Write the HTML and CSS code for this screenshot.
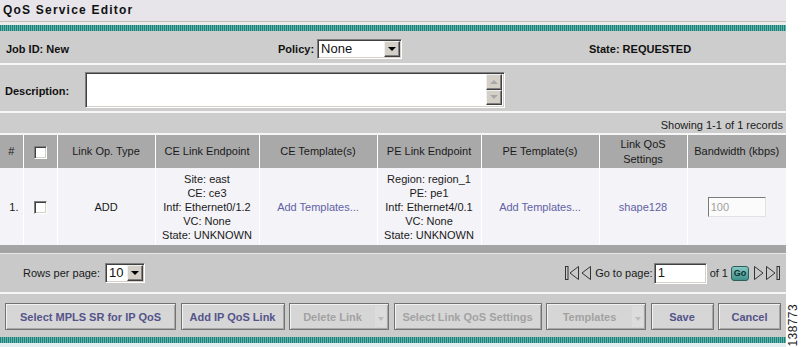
FILE: index.html
```html
<!DOCTYPE html>
<html lang="en">
<head>
    <meta charset="UTF-8">
    <title>QoS Service Editor</title>
    <link rel="stylesheet" href="styles.css">
</head>
<body>
<div class="page">
    <div class="panel">
        <div class="title">QoS Service Editor</div>
        <div class="stripe stripe-top"></div>

        <!-- job summary -->
        <div class="info-row">
            <div class="label">Job ID: New</div>
            <div class="policy">
                <span class="label">Policy:</span>
                <div class="select policy-select">
                    <span class="select-text">None</span>
                    <span class="select-btn"><i class="tri-down"></i></span>
                </div>
            </div>
            <div class="label">State: REQUESTED</div>
        </div>

        <div class="desc-row">
            <span class="label desc-label">Description:</span>
            <div class="textarea">
                <div class="scroll">
                    <span class="scroll-btn"><i class="tri-up light"></i></span>
                    <span class="scroll-btn"><i class="tri-down light"></i></span>
                </div>
            </div>
        </div>

        <div class="showing">Showing 1-1 of 1 records</div>

        <table class="grid">
            <colgroup>
                <col style="width:23px">
                <col style="width:34px">
                <col style="width:98px">
                <col style="width:104px">
                <col style="width:118px">
                <col style="width:104px">
                <col style="width:118px">
                <col style="width:88px">
                <col style="width:99px">
            </colgroup>
            <thead>
                <tr>
                    <th>#</th>
                    <th><span class="check"></span></th>
                    <th>Link Op. Type</th>
                    <th>CE Link Endpoint</th>
                    <th>CE Template(s)</th>
                    <th>PE Link Endpoint</th>
                    <th>PE Template(s)</th>
                    <th>Link QoS<br>Settings</th>
                    <th>Bandwidth (kbps)</th>
                </tr>
            </thead>
            <tbody>
                <tr>
                    <td class="num">1.</td>
                    <td><span class="check"></span></td>
                    <td>ADD</td>
                    <td>Site: east<br>CE: ce3<br>Intf: Ethernet0/1.2<br>VC: None<br>State: UNKNOWN</td>
                    <td><a href="#">Add Templates...</a></td>
                    <td>Region: region_1<br>PE: pe1<br>Intf: Ethernet4/0.1<br>VC: None<br>State: UNKNOWN</td>
                    <td><a href="#">Add Templates...</a></td>
                    <td><a href="#">shape128</a></td>
                    <td><div class="bw-input">100</div></td>
                </tr>
            </tbody>
        </table>
        <div class="grid-foot"></div>

        <div class="pager">
            <div class="rows">
                <span>Rows per page:</span>
                <div class="select rows-select">
                    <span class="select-text">10</span>
                    <span class="select-btn"><i class="tri-down"></i></span>
                </div>
            </div>
            <div class="nav">
                <svg class="nav-icon" width="14" height="16" viewBox="0 0 14 16"><rect x="0.5" y="1.5" width="2.5" height="13" fill="none" stroke="#333"/><path d="M13.5 1.5 L5 8 L13.5 14.5 Z" fill="none" stroke="#333"/></svg>
                <svg class="nav-icon" width="10" height="16" viewBox="0 0 10 16"><path d="M9.5 1.5 L1 8 L9.5 14.5 Z" fill="none" stroke="#333"/></svg>
                <span class="goto">Go to page:</span>
                <div class="page-input">1</div>
                <span class="of">of 1</span>
                <span class="go">Go</span>
                <svg class="nav-icon" width="10" height="16" viewBox="0 0 10 16"><path d="M0.5 1.5 L9 8 L0.5 14.5 Z" fill="none" stroke="#333"/></svg>
                <svg class="nav-icon last" width="14" height="16" viewBox="0 0 14 16"><path d="M0.5 1.5 L9 8 L0.5 14.5 Z" fill="none" stroke="#333"/><rect x="11" y="1.5" width="2.5" height="13" fill="none" stroke="#333"/></svg>
            </div>
        </div>

        <div class="actions">
            <div class="btn w-mpls">Select MPLS SR for IP QoS</div>
            <div class="btn w-add">Add IP QoS Link</div>
            <div class="btn drop disabled w-delete"><span class="btn-label">Delete Link</span><span class="btn-arrow"><i class="tri-down pale"></i></span></div>
            <div class="btn disabled w-link">Select Link QoS Settings</div>
            <div class="btn drop disabled w-tpl"><span class="btn-label">Templates</span><span class="btn-arrow"><i class="tri-down pale"></i></span></div>
            <div class="btn w-small">Save</div>
            <div class="btn w-small">Cancel</div>
        </div>
        <div class="stripe"></div>
        <div class="bottom"></div>
    </div>
    <div class="figure-id">138773</div>
</div>
</body>
</html>
```

FILE: styles.css
```css
* { box-sizing: border-box; }
body {
    margin: 0;
    background: #fff;
    font-family: "Liberation Sans", Arial, sans-serif;
    font-size: 11px;
    color: #1a1a1a;
}
.page {
    display: flex;
    width: 801px;
    height: 347px;
}
.panel {
    width: 786px;
    display: flex;
    flex-direction: column;
    background: #cdcdcd;
}
.figure-id {
    width: 15px;
    align-self: flex-end;
    writing-mode: vertical-rl;
    transform: rotate(180deg);
    font-size: 12px;
    line-height: 15px;
    letter-spacing: 0.4px;
    color: #222;
    padding-top: 1px;
}

.title {
    height: 22px;
    background: #e7e5ea;
    border-bottom: 1px solid #c6bdb4;
    font-size: 12px;
    font-weight: bold;
    letter-spacing: 1.2px;
    line-height: 21px;
    padding-left: 3px;
    color: #111;
}
.stripe {
    height: 6px;
    flex-shrink: 0;
    background: repeating-linear-gradient(90deg, #217f77 0 1px, #5fb3ab 1px 2px);
}
.stripe-top {
    height: 9px;
    border-top: 3px solid #ebebeb;
}
.label { font-weight: bold; color: #111; }

.info-row {
    height: 34px;
    display: grid;
    grid-template-columns: 272px 311px 1fr;
    align-items: center;
    padding: 3px 0 0 6px;
    border-bottom: 2px solid #f6f6f6;
}
.policy { display: flex; align-items: center; gap: 3px; }

.select {
    display: flex;
    background: #fff;
    border: 1px solid;
    border-color: #808080 #fff #fff #808080;
    box-shadow: inset 1px 1px 0 #404040, inset -1px -1px 0 #d4d0c8;
    padding: 1px;
}
.policy-select { width: 85px; height: 20px; }
.rows-select { width: 40px; height: 20px; }
.select-text {
    flex: 1;
    font-size: 13px;
    line-height: 16px;
    padding-left: 2px;
    color: #111;
}
.select-btn {
    width: 16px;
    background: #d4d0c8;
    border: 1px solid;
    border-color: #f0f0f0 #404040 #404040 #f0f0f0;
    box-shadow: inset -1px -1px 0 #808080;
    display: flex;
    align-items: center;
    justify-content: center;
}
.tri-down, .tri-up {
    width: 0;
    height: 0;
    border-left: 4px solid transparent;
    border-right: 4px solid transparent;
}
.tri-down { border-top: 4px solid #000; }
.tri-up { border-bottom: 4px solid #000; }
.tri-down.light { border-top-color: #a8a8a8; }
.tri-up.light { border-bottom-color: #a8a8a8; }
.tri-down.pale { border-top-color: #bcbcbc; border-left-width: 3px; border-right-width: 3px; }

.desc-row {
    height: 48px;
    display: flex;
    align-items: center;
    padding: 7px 0 3px 5px;
    border-bottom: 2px solid #f6f6f6;
}
.desc-label { width: 80px; padding-top: 1px; }
.textarea {
    width: 420px;
    height: 36px;
    background: #fff;
    border: 1px solid;
    border-color: #808080 #fff #fff #808080;
    box-shadow: inset 1px 1px 0 #404040, inset -1px -1px 0 #d4d0c8;
    display: flex;
    justify-content: flex-end;
    padding: 1px 2px 2px 0;
}
.scroll { display: flex; flex-direction: column; width: 16px; }
.scroll-btn {
    flex: 1;
    background: #d4d0c8;
    border: 1px solid;
    border-color: #f0f0f0 #404040 #404040 #f0f0f0;
    box-shadow: inset -1px -1px 0 #808080;
    display: flex;
    align-items: center;
    justify-content: center;
}

.showing {
    height: 22px;
    padding: 4px 3px 0;
    line-height: 16px;
    text-align: right;
    border-bottom: 2px solid #f6f6f6;
}

.grid {
    width: 786px;
    border-collapse: collapse;
    table-layout: fixed;
}
.grid th {
    height: 33px;
    background: #a9a9a9;
    font-weight: normal;
    line-height: 15px;
    border-left: 1px solid #fff;
    padding: 0 2px;
    color: #1a1a1a;
}
.grid td {
    height: 77px;
    background: #f4f3f7;
    text-align: center;
    line-height: 14px;
    border-left: 1px solid #fff;
    padding: 0 2px;
}
.grid th:first-child, .grid td:first-child { border-left: none; }
.grid td.num { text-align: right; padding-right: 4px; }
.grid a { color: #6262a6; text-decoration: none; }
.check {
    display: inline-block;
    width: 13px;
    height: 13px;
    vertical-align: middle;
    background: #fff;
    border: 1px solid;
    border-color: #808080 #fff #fff #808080;
    box-shadow: inset 1px 1px 0 #404040, inset -1px -1px 0 #d4d0c8;
}
.bw-input {
    width: 58px;
    height: 20px;
    margin: 0 auto;
    text-align: left;
    padding-left: 2px;
    line-height: 18px;
    color: #a0a0a0;
    background: #fbfbfb;
    border: 1px solid;
    border-color: #7a7a7a #e2e2e2 #e2e2e2 #7a7a7a;
}
.grid-foot {
    height: 9px;
    background: #a4a4a4;
    border-bottom: 1px solid #e6e6e6;
}

.pager {
    height: 40px;
    display: flex;
    align-items: center;
    justify-content: space-between;
    padding: 0 6px 0 23px;
    background: #c9c9c9;
    border-bottom: 2px solid #f6f6f6;
}
.rows { display: flex; align-items: center; gap: 5px; }
.nav { display: flex; align-items: center; }
.nav-icon { margin-right: 2px; }
.nav-icon.last { margin-right: 0; }
.goto { margin: 0 1px 0 2px; }
.page-input {
    width: 53px;
    height: 21px;
    background: #fff;
    font-size: 13px;
    line-height: 17px;
    padding-left: 3px;
    border: 1px solid;
    border-color: #808080 #fff #fff #808080;
    box-shadow: inset 1px 1px 0 #404040, inset -1px -1px 0 #d4d0c8;
}
.of { margin: 0 3px 0 3px; }
.go {
    width: 18px;
    height: 15px;
    margin-right: 5px;
    border-radius: 3px;
    border: 1px solid #2c5f5c;
    background: linear-gradient(#86c8c3, #3f908b);
    font-size: 9px;
    font-weight: bold;
    line-height: 13px;
    text-align: center;
    color: #10302e;
}

.actions {
    height: 43px;
    display: flex;
    align-items: flex-start;
    gap: 4.5px;
    padding: 9px 0 0 5px;
    background: #cbcbcb;
}
.btn {
    height: 27px;
    display: flex;
    align-items: center;
    justify-content: center;
    background: #d6d6d6;
    border: 1px solid #737373;
    box-shadow: inset 1px 1px 0 #f2f2f2, inset -1px -1px 0 #a8a8a8;
    font-weight: bold;
    color: #54548a;
}
.btn.disabled { color: #a2a2a2; }
.btn.drop { justify-content: flex-start; padding: 2px 2px 2px 0; }
.btn-label { flex: 1; text-align: center; }
.btn-arrow {
    width: 11px;
    align-self: stretch;
    background: #dcdcdc;
    display: flex;
    align-items: center;
    justify-content: center;
    padding-top: 4px;
}
.w-mpls { width: 171px; }
.w-add { width: 104px; }
.w-delete { width: 100px; }
.w-link { width: 148px; }
.w-tpl { width: 100px; }
.w-small { width: 63px; }
.bottom { height: 4px; background: #e2eef0; }
```
